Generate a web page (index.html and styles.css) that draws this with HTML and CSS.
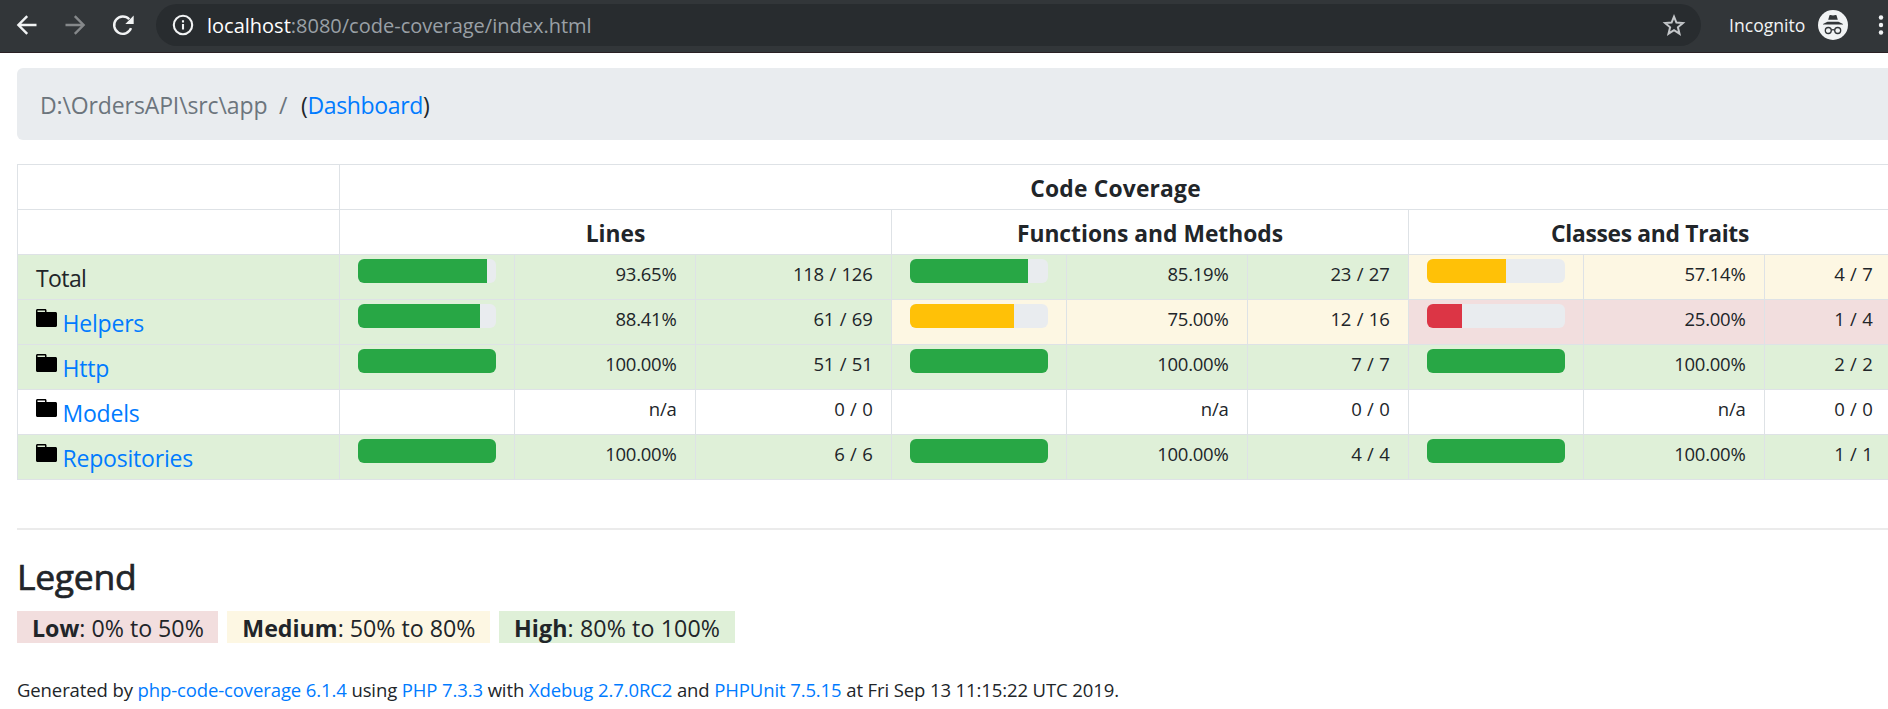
FILE: index.html
```html
<!DOCTYPE html>
<html lang="en">
<head>
<meta charset="utf-8">
<title>Code Coverage</title>
<link rel="stylesheet" href="styles.css">
</head>
<body>
<svg width="0" height="0" class="defs"><symbol id="folder" viewBox="0 0 14 16"><path d="M13 4H7V3c0-.66-.31-1-1-1H1c-.55 0-1 .45-1 1v10c0 .55.45 1 1 1h12c.55 0 1-.45 1-1V5c0-.55-.45-1-1-1zM6 4H1V3h5v1z"/></symbol></svg>
<div class="toolbar">
  <div class="nav">
    <svg class="nav-icon" viewBox="0 0 24 24"><path d="M21.5 12H4M12.2 3.2L3.4 12l8.8 8.8"/></svg>
    <svg class="nav-icon dim" viewBox="0 0 24 24"><path d="M2.500 12H20M11.8 3.200L20.600 12l-8.800 8.800"/></svg>
    <svg class="nav-icon" viewBox="0 0 24 24"><path d="M20 15.200A8.700 8.700 0 1 1 18.300 6.300"/><path class="solid" d="M22.700 2.500v8.400h-8.400z"/></svg>
  </div>
  <div class="omnibox">
    <svg class="info" viewBox="0 0 22 22"><circle cx="11" cy="11" r="9.200"/><path d="M11 10v5.500M11 6.200v2.200"/></svg>
    <span class="url"><b>localhost</b>:8080/code-coverage/index.html</span>
    <svg class="star" viewBox="0 0 24 24"><path d="M12 3.600l2.400 6 6.500.5-5 4.200 1.600 6.400-5.500-3.500-5.500 3.500 1.600-6.400-5-4.200 6.500-.5z"/></svg>
  </div>
  <span class="incognito">Incognito</span>
  <svg class="avatar" viewBox="0 0 30 30"><circle class="disc" cx="15" cy="15" r="15"/><path class="hat" d="M11.500 5.300q.4-.5 1-.3l2.500.6 2.500-.6q.6-.2 1 .3l1.300 4.500h-9.600zM5 14.500v-.5l4.500-2.200h11L25 14v.5z"/><g class="specs"><circle cx="10.300" cy="20.500" r="3"/><circle cx="19.700" cy="20.500" r="3"/><path d="M13.300 20.300q1.700-1.200 3.400 0"/></g></svg>
  <svg class="dots" viewBox="0 0 6 20"><circle cx="3" cy="2.500" r="2.200"/><circle cx="3" cy="10" r="2.200"/><circle cx="3" cy="17.500" r="2.200"/></svg>
</div>
<main>
  <nav class="breadcrumb"><span class="path">D:\OrdersAPI\src\app</span><span class="slash">/</span><span class="dash">(<a>Dashboard</a>)</span></nav>
  <table class="coverage">
    <colgroup><col class="c-name"><col class="c-bar"><col class="c-pct"><col class="c-lines"><col class="c-bar"><col class="c-pct"><col class="c-fn"><col class="c-bar"><col class="c-pct"><col class="c-cls"></colgroup>
    <thead>
      <tr><td></td><th colspan="9" class="wide">Code Coverage</th></tr>
      <tr><td></td><th colspan="3">Lines</th><th colspan="3">Functions and Methods</th><th colspan="3" class="tight">Classes and Traits</th></tr>
    </thead>
    <tbody>
      <tr>
        <td class="name high total">Total</td>
        <td class="high"><div class="bar"><div class="fill g" style="width:93.65%"></div></div></td><td class="num high">93.65%</td><td class="num high">118 / 126</td>
        <td class="high"><div class="bar"><div class="fill g" style="width:85.19%"></div></div></td><td class="num high">85.19%</td><td class="num high">23 / 27</td>
        <td class="medium"><div class="bar"><div class="fill y" style="width:57.14%"></div></div></td><td class="num medium">57.14%</td><td class="num medium">4 / 7</td>
      </tr>
      <tr>
        <td class="name high"><div class="entry"><svg class="folder"><use href="#folder"/></svg><a>Helpers</a></div></td>
        <td class="high"><div class="bar"><div class="fill g" style="width:88.41%"></div></div></td><td class="num high">88.41%</td><td class="num high">61 / 69</td>
        <td class="medium"><div class="bar"><div class="fill y" style="width:75%"></div></div></td><td class="num medium">75.00%</td><td class="num medium">12 / 16</td>
        <td class="low"><div class="bar"><div class="fill r" style="width:25%"></div></div></td><td class="num low">25.00%</td><td class="num low">1 / 4</td>
      </tr>
      <tr>
        <td class="name high"><div class="entry"><svg class="folder"><use href="#folder"/></svg><a>Http</a></div></td>
        <td class="high"><div class="bar"><div class="fill g" style="width:100%"></div></div></td><td class="num high">100.00%</td><td class="num high">51 / 51</td>
        <td class="high"><div class="bar"><div class="fill g" style="width:100%"></div></div></td><td class="num high">100.00%</td><td class="num high">7 / 7</td>
        <td class="high"><div class="bar"><div class="fill g" style="width:100%"></div></div></td><td class="num high">100.00%</td><td class="num high">2 / 2</td>
      </tr>
      <tr>
        <td class="name"><div class="entry"><svg class="folder"><use href="#folder"/></svg><a>Models</a></div></td>
        <td></td><td class="num">n/a</td><td class="num">0 / 0</td>
        <td></td><td class="num">n/a</td><td class="num">0 / 0</td>
        <td></td><td class="num">n/a</td><td class="num">0 / 0</td>
      </tr>
      <tr>
        <td class="name high"><div class="entry"><svg class="folder"><use href="#folder"/></svg><a>Repositories</a></div></td>
        <td class="high"><div class="bar"><div class="fill g" style="width:100%"></div></div></td><td class="num high">100.00%</td><td class="num high">6 / 6</td>
        <td class="high"><div class="bar"><div class="fill g" style="width:100%"></div></div></td><td class="num high">100.00%</td><td class="num high">4 / 4</td>
        <td class="high"><div class="bar"><div class="fill g" style="width:100%"></div></div></td><td class="num high">100.00%</td><td class="num high">1 / 1</td>
      </tr>
    </tbody>
  </table>
  <footer>
    <h4>Legend</h4>
    <div class="legend">
      <span class="key low"><b>Low</b>: 0% to 50%</span>
      <span class="key medium"><b>Medium</b>: 50% to 80%</span>
      <span class="key high wide"><b>High</b>: 80% to 100%</span>
    </div>
    <p class="generated">Generated by <a>php-code-coverage 6.1.4</a> using <a>PHP 7.3.3</a> with <a>Xdebug 2.7.0RC2</a> and <a>PHPUnit 7.5.15</a> at Fri Sep 13 11:15:22 UTC 2019.</p>
  </footer>
</main>
</body>
</html>
```
FILE: styles.css
```css
* { box-sizing: border-box; }
html { overflow: hidden; }
body {
  margin: 0;
  height: 709px;
  overflow: hidden;
  background: #fff;
  color: #212529;
  font-family: "Open Sans", "Noto Sans", sans-serif;
  font-size: 23px;
  line-height: 36px;
}
a { color: #007bff; }
.defs { display: none; }

/* Browser toolbar */
.toolbar {
  display: flex;
  align-items: center;
  height: 53px;
  padding: 0 4px 3px 15px;
  background: #323639;
  border-bottom: 1px solid #2a2024;
}
.nav { display: flex; gap: 24px; }
.nav-icon { width: 24px; height: 24px; fill: none; stroke: #f1f3f4; stroke-width: 2.4; }
.nav-icon.dim { stroke: #85888a; }
.nav-icon .solid { fill: #f1f3f4; stroke: none; }
.omnibox {
  display: flex;
  align-items: center;
  width: 1545px;
  height: 42px;
  margin-left: 21px;
  padding: 0 15px 0 16px;
  border-radius: 21px;
  background: #282c2f;
}
.info { width: 22px; height: 22px; fill: none; stroke: #f1f3f4; stroke-width: 2.1; }
.url {
  flex: 1;
  margin-left: 13px;
  padding-top: 2px;
  color: #9aa0a6;
  font-size: 20px;
  line-height: 28px;
}
.url b { color: #fff; font-weight: 400; }
.star { width: 24px; height: 24px; fill: none; stroke: #c3c6c9; stroke-width: 2; }
.incognito { width: 89px; margin-left: 28px; color: #f1f3f4; font-size: 17.6px; line-height: 24px; }
.avatar { width: 30px; height: 30px; }
.avatar .disc { fill: #f1f3f4; }
.avatar .hat { fill: #323639; }
.avatar .specs { fill: none; stroke: #323639; stroke-width: 1.3; }
.dots { width: 6px; height: 20px; margin-left: 30px; fill: #f1f3f4; }

/* Report */
main { padding: 15px 0 0 17px; }
.breadcrumb {
  display: flex;
  height: 72px;
  padding: 19px 22px 16px 23px;
  border-radius: 6px 0 0 6px;
  background: #e9ecef;
  color: #6c757d;
  line-height: 37px;
}
.path { width: 239px; letter-spacing: -0.12px; }
.slash { width: 22px; }
.dash { color: #212529; letter-spacing: -0.35px; }

.coverage {
  width: 1875px;
  margin-top: 24px;
  table-layout: fixed;
  border-collapse: separate;
  border-spacing: 0;
  border-top: 1px solid #dee2e6;
  border-left: 1px solid #dee2e6;
}
.c-name { width: 322px; }
.c-bar { width: 175px; }
.c-pct { width: 181px; }
.c-lines { width: 196px; }
.c-fn { width: 161px; }
.c-cls { width: 127px; }
.coverage td, .coverage th {
  height: 45px;
  padding: 4px 18px 0;
  vertical-align: top;
  border-right: 1px solid #dee2e6;
  border-bottom: 1px solid #dee2e6;
}
.coverage th { font-size: 22.8px; font-weight: 700; line-height: 39px; }
.coverage th.tight { letter-spacing: -0.3px; }
.coverage th.wide { letter-spacing: 0.2px; }
.name { line-height: 39px; letter-spacing: -0.2px; }
.name.total { letter-spacing: -0.6px; }
.coverage .num {
  padding-right: 18.5px;
  text-align: right;
  font-size: 18.5px;
  line-height: 29px;
  letter-spacing: -0.25px;
  word-spacing: 1px;
}
.entry { display: flex; align-items: flex-start; gap: 5.5px; }
.folder { width: 21px; height: 24px; margin-top: 2px; }
.bar { height: 24px; border-radius: 6px; overflow: hidden; background: #e9ecef; }
.fill { height: 24px; }
.g { background: #28a745; }
.y { background: #ffc107; }
.r { background: #dc3545; }
.high { background: #dff0d8; }
.medium { background: #fdf7e3; }
.low { background: #f2dede; }

footer { margin-top: 48px; border-top: 2px solid #ebebeb; }
h4 {
  margin: 25px 0 0;
  font-size: 35.5px;
  font-weight: 400;
  line-height: 43px;
  letter-spacing: -0.3px;
  -webkit-text-stroke: 0.7px #212529;
}
.legend { display: flex; gap: 9px; margin-top: 13px; font-size: 23.2px; line-height: 35px; }
.key { height: 32px; padding: 0 14.5px 0 15px; white-space: nowrap; }
.key.wide { letter-spacing: 0.12px; }
.legend b { font-weight: 700; }
.generated { margin: 32px 0 0; font-size: 18.5px; line-height: 29px; letter-spacing: -0.11px; }
```
